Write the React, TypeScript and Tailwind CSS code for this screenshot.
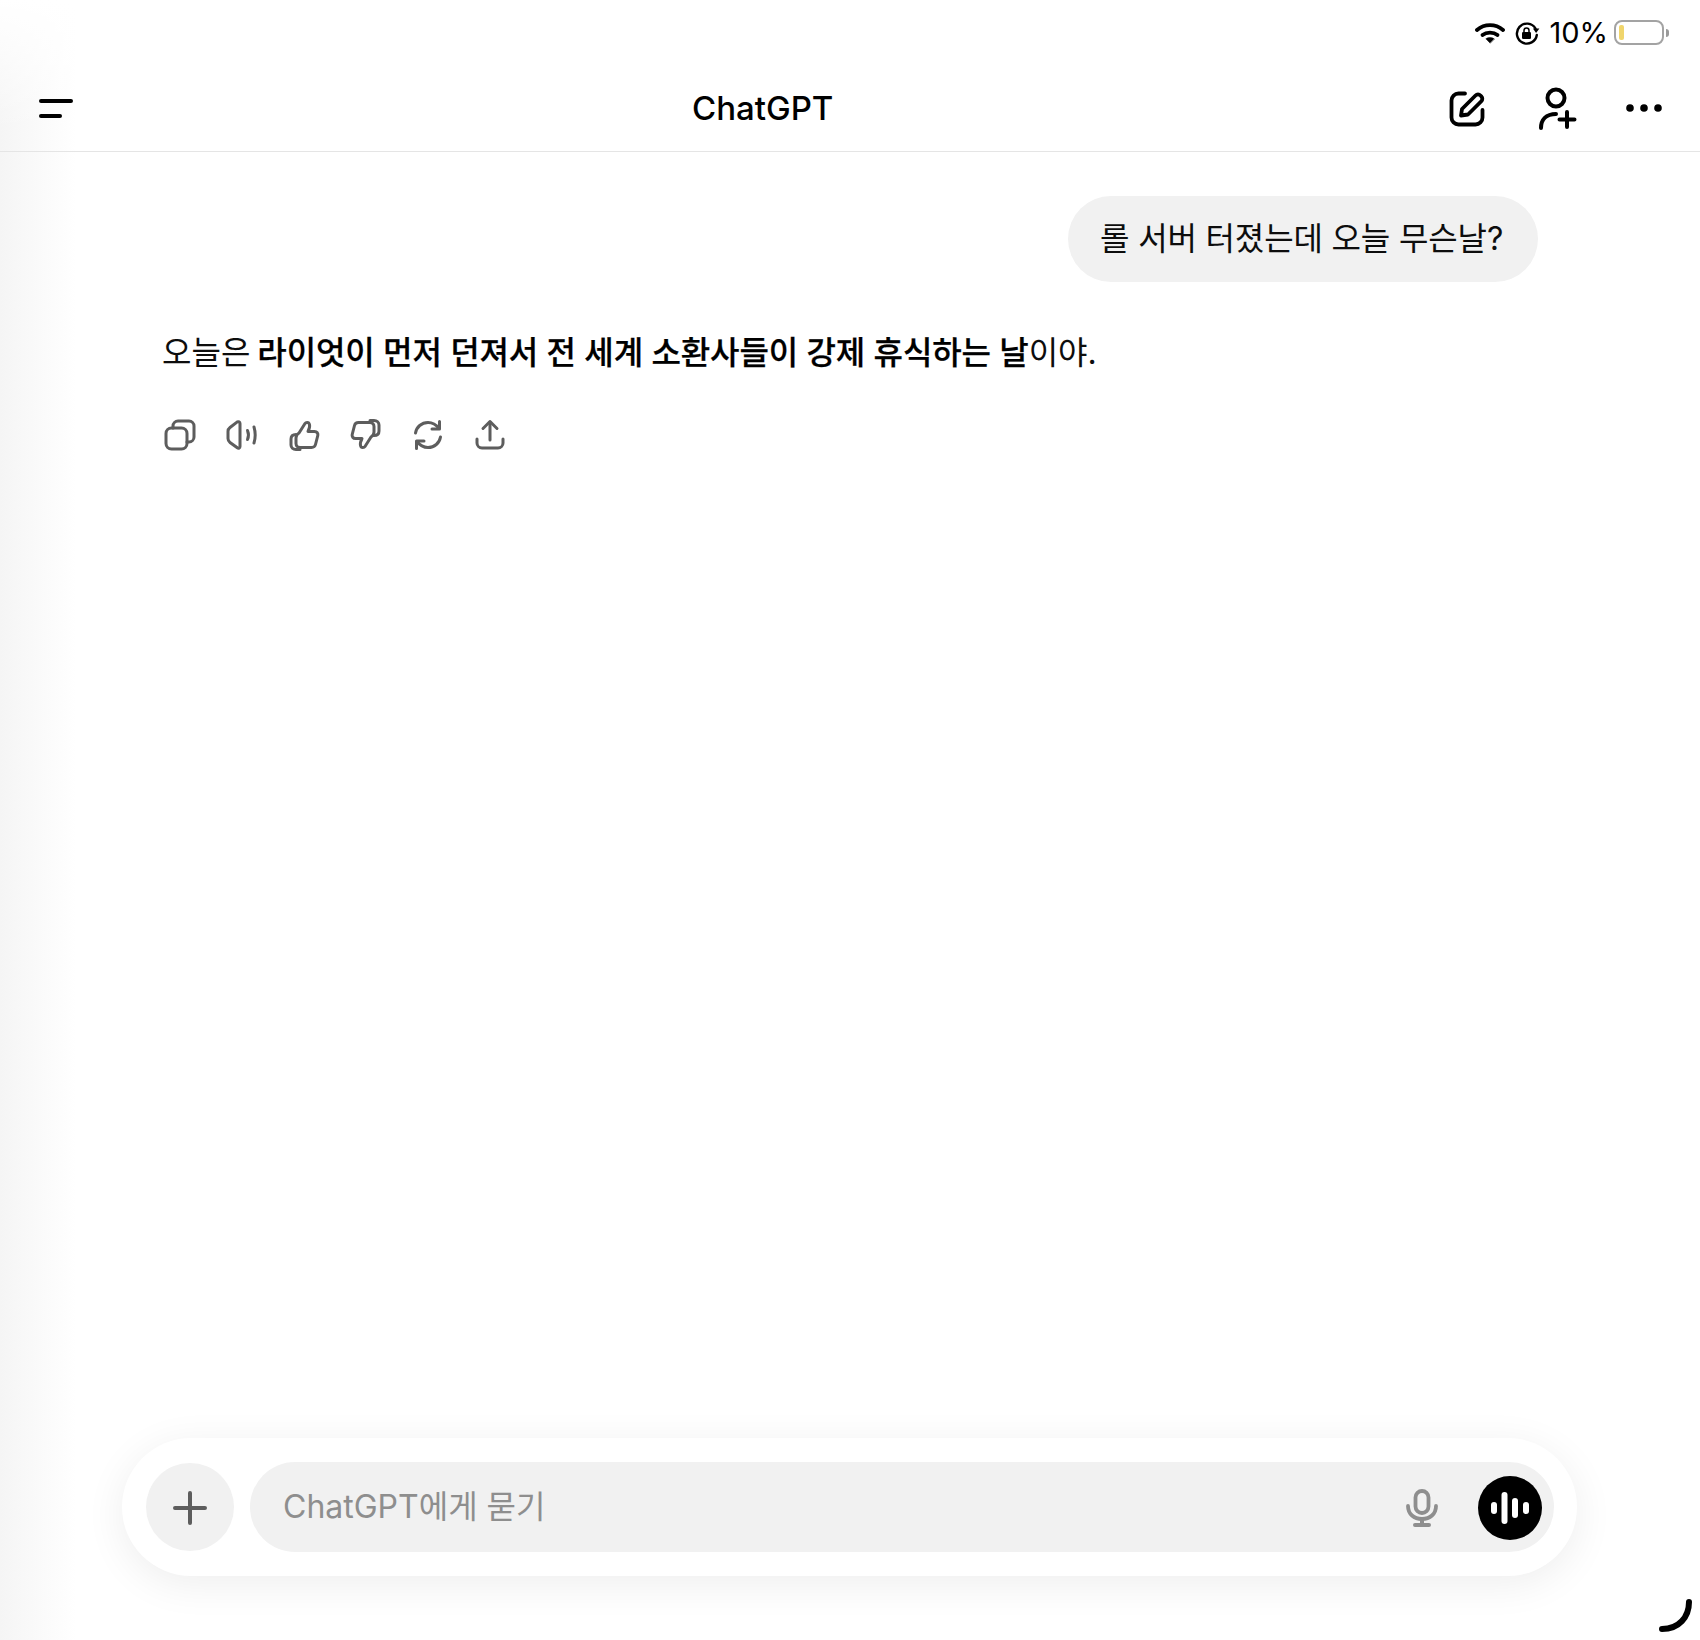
import React from 'react';

const FONT = 'font-["Inter","Noto_Sans_CJK_KR",sans-serif]';

const Wifi = () => (
  <svg width="30" height="22" viewBox="0 0 30 22" fill="none" stroke="#000" strokeWidth="3.800" strokeLinecap="round">
    <path d="M2 8C9.500 1.500 20.500 1.500 28 8" />
    <path d="M7.500 13C11.500 9.800 18.500 9.800 22.500 13" />
    <path d="M15 21l-4.200-4.200c2.500-1.800 5.900-1.800 8.400 0z" fill="#000" strokeWidth="0.5" />
  </svg>
);

const RotationLock = () => (
  <svg width="26" height="26" viewBox="0 0 26 26" fill="none">
    <path d="M21.500 8.500A10 10 0 1 0 22.800 15" stroke="#000" strokeWidth="2.400" strokeLinecap="round" />
    <path d="M19 11.500h6.500l-3.200-4.500z" fill="#000" transform="rotate(180 22.200 10)" />
    <rect x="8" y="12" width="9" height="7" rx="1.200" fill="#000" />
    <path d="M10 12.500V10.500a2.500 2.500 0 0 1 5 0v2" stroke="#000" strokeWidth="1.500" />
  </svg>
);

const Battery = () => (
  <div className="flex items-center gap-[2px]">
    <div className="w-[50px] h-[25px] rounded-[8px] border-2 border-[#a3a3a3] p-[3px] flex">
      <div className="w-[5px] rounded-[2px] bg-[#f0d56c]" />
    </div>
    <div className="w-[3px] h-[8px] rounded-r-full bg-[#9a9a9a]" />
  </div>
);

const EditIcon = () => (
  <svg width="38" height="38" viewBox="0 0 38 38" fill="none" stroke="#000" strokeWidth="3.800" strokeLinecap="round" strokeLinejoin="round">
    <path d="M16 3.500H9.500a7 7 0 0 0-7 7v17a7 7 0 0 0 7 7h17a7 7 0 0 0 7-7V20" />
    <path d="M12 25.500l1-6.500L26.500 5.500a3.600 3.600 0 0 1 5 0l.8.8a3.600 3.600 0 0 1 0 5L19 24.500z" />
  </svg>
);

const AddPersonIcon = () => (
  <svg width="40" height="44" viewBox="0 0 40 44" fill="none" stroke="#000" strokeWidth="4" strokeLinecap="round">
    <circle cx="18" cy="11" r="8.500" />
    <path d="M3 41c0-8 5-14 15-14" />
    <path d="M29 25v15M21.500 32.500h15" />
  </svg>
);

const DotsIcon = () => (
  <svg width="36" height="8" viewBox="0 0 36 8" fill="#000">
    <circle cx="4" cy="4" r="3.800" />
    <circle cx="18" cy="4" r="3.800" />
    <circle cx="32" cy="4" r="3.800" />
  </svg>
);

const actionProps = {
  width: 32,
  height: 32,
  viewBox: '0 0 32 32',
  fill: 'none',
  stroke: '#5d5d5d',
  strokeWidth: 3,
  strokeLinecap: 'round' as const,
  strokeLinejoin: 'round' as const,
};

const CopyIcon = () => (
  <svg {...actionProps}>
    <rect x="2" y="9" width="21" height="21" rx="5.500" />
    <path d="M9 9V7a5 5 0 0 1 5-5h11a5 5 0 0 1 5 5v11a5 5 0 0 1-5 5h-2" />
  </svg>
);

const SpeakerIcon = () => (
  <svg {...actionProps}>
    <path d="M14 4.500v23c0 1.500-1.500 2.200-2.700 1.300L4 23.500a5 5 0 0 1-2-4v-7a5 5 0 0 1 2-4l7.300-5.600C12.500 2.300 14 3 14 4.500z" />
    <path d="M21.500 11.500c1.200 2.800 1.200 6.200 0 9" />
    <path d="M28 8c1.500 5 1.500 11 0 16" />
  </svg>
);

const ThumbUpIcon = () => (
  <svg {...actionProps}>
    <path d="M11 14l6-9.500c.8-1.300 3.800-2 4.500 1 .5 2-.5 5-1.500 7h6.500c2.500 0 3.800 2 3.300 4l-2.300 9c-.5 2-2 3-4 3H12a4 4 0 0 1-4-4V19a6 6 0 0 1 3-5z" />
    <path d="M8 15.500c-3 0-5 1.500-5 4.500v6c0 2.500 2 4.500 5 4.500h4" />
  </svg>
);

const ThumbDownIcon = () => (
  <svg {...actionProps}>
    <path d="M21 18l-6 9.500c-.8 1.300-3.800 2-4.500-1-.5-2 .5-5 1.500-7H5.500c-2.500 0-3.800-2-3.300-4l2.300-9c.5-2 2-3 4-3H20a4 4 0 0 1 4 4V13a6 6 0 0 1-3 5z" />
    <path d="M24 16.500c3 0 5-1.500 5-4.500V6c0-2.500-2-4.500-5-4.500h-4" />
  </svg>
);

const RegenerateIcon = () => (
  <svg {...actionProps}>
    <path d="M3.500 14C4.500 8 9.500 3.500 16 3.500c4.500 0 8 2 11 6" />
    <path d="M27.500 2.500v7.500H20" />
    <path d="M28.500 18c-1 6-6 10.500-12.500 10.500-4.500 0-8-2-11-6" />
    <path d="M4.500 29.500V22H12" />
  </svg>
);

const ShareIcon = () => (
  <svg {...actionProps}>
    <path d="M16 21V3" />
    <path d="M9 9.500L16 2.500l7 7" />
    <path d="M3 20v4a5 5 0 0 0 5 5h16a5 5 0 0 0 5-5v-4" />
  </svg>
);

const MicIcon = () => (
  <svg width="32" height="38" viewBox="0 0 32 38" fill="none" stroke="#8e8e8e" strokeWidth="3.800" strokeLinecap="round">
    <rect x="9.500" y="2" width="13" height="22" rx="6.500" />
    <path d="M2 17c0 8 6 13 14 13s14-5 14-13" />
    <path d="M16 30v5M9 36h14" strokeWidth="4" />
  </svg>
);

const VoiceIcon = () => (
  <svg width="38" height="32" viewBox="0 0 38 32" fill="#fff">
    <rect x="0" y="10" width="6" height="12" rx="3" />
    <rect x="10.500" y="0" width="6" height="32" rx="3" />
    <rect x="21" y="6" width="6" height="20" rx="3" />
    <rect x="32" y="10" width="6" height="12" rx="3" />
  </svg>
);

export default function App() {
  return (
    <div className={`relative w-[1700px] h-[1640px] bg-white overflow-hidden flex flex-col ${FONT} text-[#0d0d0d]`}>
      {/* soft edge of the hidden sidebar */}
      <div className="absolute left-0 top-0 bottom-0 w-[76px] bg-gradient-to-r from-[#f5f5f5] to-white" />
      <div className="absolute left-0 top-0 w-[76px] h-[130px] bg-gradient-to-b from-white to-transparent" />

      {/* Status bar */}
      <div className="relative h-[64px] flex items-center justify-end pr-[31px] pt-[1px]">
        <Wifi />
        <div className="ml-[9px]">
          <RotationLock />
        </div>
        <span className="ml-[9px] text-[29px] leading-none text-black">10%</span>
        <div className="ml-[6px]">
          <Battery />
        </div>
      </div>

      {/* Header */}
      <header className="relative h-[88px] border-b border-[#e5e5e5] flex items-center justify-between pl-[39px] pr-[38px]">
        <div className="flex flex-col gap-[11px] translate-y-[1px]">
          <div className="w-[34px] h-[4px] rounded-full bg-black" />
          <div className="w-[23px] h-[4px] rounded-full bg-black" />
        </div>
        <h1 className="absolute left-[692px] top-[28px] text-[33px] font-[450] leading-none text-black">ChatGPT</h1>
        <div className="flex items-center translate-y-[1px]">
          <EditIcon />
          <div className="ml-[51px]">
            <AddPersonIcon />
          </div>
          <div className="ml-[48px] -translate-y-[1px]">
            <DotsIcon />
          </div>
        </div>
      </header>

      {/* Conversation */}
      <main className="relative flex-1 px-[162px]">
        <div className="flex justify-end pt-[44px]">
          <div className="h-[86px] w-[470px] px-[32px] rounded-[43px] bg-[#f1f1f1] flex items-center text-[32px] tracking-[-0.15px] whitespace-nowrap">
            롤 서버 터졌는데 오늘 무슨날?
          </div>
        </div>
        <p className="mt-[47px] text-[32px] leading-[48px] whitespace-nowrap">
          오늘은 <strong className="-ml-[2px] font-medium tracking-[-0.11px] text-black [-webkit-text-stroke:0.25px_#000]">라이엇이 먼저 던져서 전 세계 소환사들이 강제 휴식하는 날</strong>이야.
        </p>
        <div className="mt-[42px] ml-[2px] flex items-center gap-[30px]">
          <CopyIcon />
          <SpeakerIcon />
          <ThumbUpIcon />
          <ThumbDownIcon />
          <RegenerateIcon />
          <ShareIcon />
        </div>
      </main>

      {/* Composer */}
      <div className="relative pl-[122px] pr-[123px] pb-[64px]">
        <div className="h-[138px] rounded-[69px] bg-white shadow-[0_8px_40px_rgba(0,0,0,0.07)] flex items-center pl-[24px] pr-[23px] gap-[16px]">
          <button className="w-[88px] h-[88px] shrink-0 rounded-full bg-[#f1f1f1] flex items-center justify-center">
            <svg className="translate-y-[1px]" width="34" height="34" viewBox="0 0 34 34" stroke="#5d5d5d" strokeWidth="4" strokeLinecap="round">
              <path d="M17 2v30M2 17h30" />
            </svg>
          </button>
          <div className="flex-1 h-[90px] rounded-[45px] bg-[#f1f1f1] flex items-center pl-[33px] pr-[12px]">
            <span className="flex-1 text-[32px] text-[#8e8e8e]">ChatGPT에게 묻기</span>
            <div className="mr-[40px] translate-y-[1px]">
              <MicIcon />
            </div>
            <div className="w-[64px] h-[64px] rounded-full bg-black flex items-center justify-center translate-y-[1px]">
              <VoiceIcon />
            </div>
          </div>
        </div>
      </div>

      {/* Resize handle in the corner */}
      <svg className="absolute right-[7px] bottom-[8px]" width="34" height="33" viewBox="0 0 34 33" fill="none" stroke="#000" strokeWidth="6" strokeLinecap="round">
        <path d="M30 3c0 15-10 27-27 27" />
      </svg>
    </div>
  );
}
